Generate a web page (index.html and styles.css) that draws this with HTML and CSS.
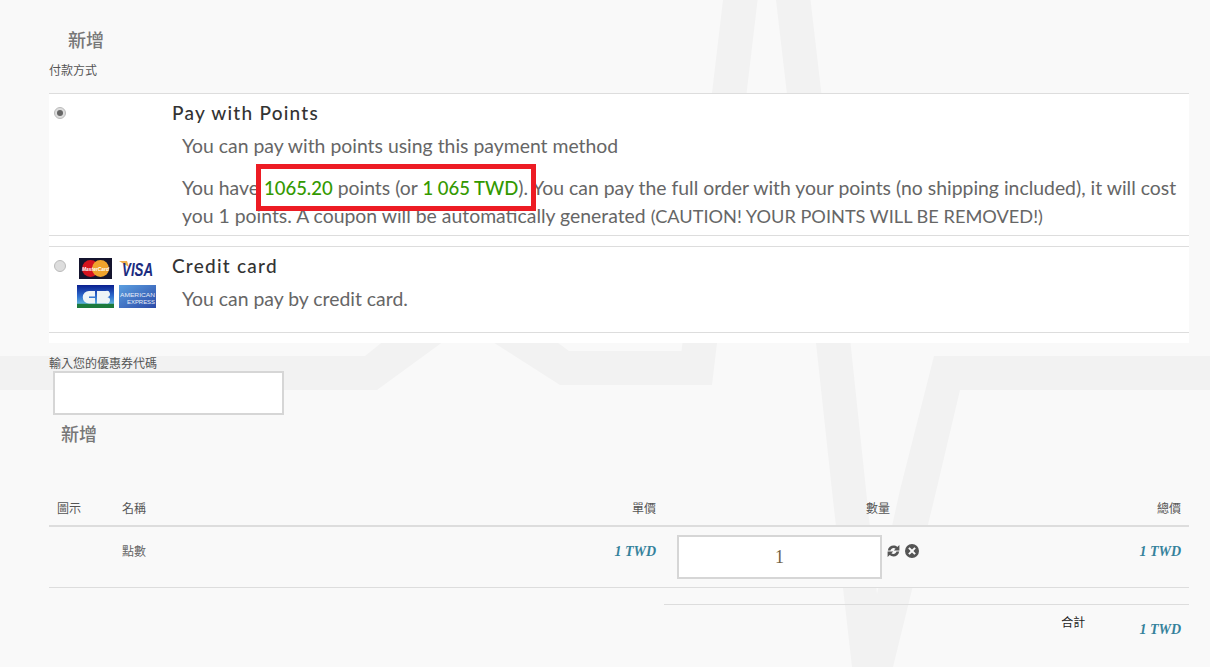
FILE: index.html
```html
<!DOCTYPE html>
<html lang="zh-Hant">

<head>
    <meta charset="UTF-8">
    <meta name="viewport" content="width=device-width, initial-scale=1.0">
    <title>付款方式</title>
    <link rel="stylesheet" href="styles.css">
</head>

<body>
    <svg class="bg-mark" width="1210" height="667" viewBox="0 0 1210 667">
        <path d="M0 356H365L466 275L569 351H681.5L723 0H757.6L717 343L712 385H560L466 325L377 390H0Z" />
        <path d="M776 0H810.5L850.5 343L877 594L900 490L934 356H1210V390H960L934 500L893 667H852L833 500L816 343Z" />
    </svg>

    <div class="page">
        <a class="add-link first">新增</a>
        <div class="label pay-label">付款方式</div>

        <div class="methods">
            <div class="method">
                <div class="method-pick">
                    <span class="radio checked"></span>
                </div>
                <div class="method-body">
                    <h3>Pay with Points</h3>
                    <p>You can pay with points using this payment method</p>
                    <p>You have <b>1065.20</b> points (or <b>1 065 TWD</b>). You can pay the full order with your points (no shipping included), it will cost you 1 points. A coupon will be automatically generated <span class="caps">(CAUTION! YOUR POINTS WILL BE REMOVED!)</span></p>
                    <div class="highlight"></div>
                </div>
            </div>

            <div class="method method-card">
                <div class="method-pick">
                    <span class="radio"></span>
                    <div class="cards">
                        <svg class="card-mc" width="33" height="21" viewBox="0 0 33 21">
                            <rect width="33" height="21" fill="#14142e" />
                            <circle cx="11.5" cy="10.5" r="8.5" fill="#d5121e" />
                            <circle cx="21.5" cy="10.5" r="8.5" fill="#f0a32c" />
                            <text x="16.5" y="12.5" text-anchor="middle" font-size="5" font-weight="bold" font-style="italic" fill="#fff" font-family="Liberation Sans" textLength="27" lengthAdjust="spacingAndGlyphs">MasterCard</text>
                        </svg>
                        <svg class="card-visa" width="37" height="23" viewBox="0 0 37 23">
                            <path d="M0 4H8L10 10Z" fill="#efb04e" />
                            <text transform="translate(3 19) scale(.74 1)" font-size="18" font-weight="bold" font-style="italic" fill="#1b2c80" font-family="Liberation Sans">VISA</text>
                        </svg>
                        <svg class="card-cb" width="37" height="23" viewBox="0 0 37 23">
                            <defs>
                                <linearGradient id="cbfill" x1="0" y1="0" x2="0" y2="1">
                                    <stop offset="0" stop-color="#0a1f8f" />
                                    <stop offset=".5" stop-color="#2f6fd0" />
                                    <stop offset=".8" stop-color="#5bb0d8" />
                                    <stop offset=".82" stop-color="#1c7a3c" />
                                    <stop offset="1" stop-color="#1c7a3c" />
                                </linearGradient>
                            </defs>
                            <rect width="37" height="23" fill="url(#cbfill)" />
                            <path d="M18 6H12a6.2 6.2 0 0 0 0 12.5H18V13H12V11.5H18ZM20 6H29a3 3 0 0 1 1.5 6.2a3 3 0 0 1 -1.5 6.3H20Z" fill="#eef4f6" />
                        </svg>
                        <svg class="card-amex" width="37" height="23" viewBox="0 0 37 23">
                            <defs>
                                <linearGradient id="amexfill" x1="0" y1="0" x2="1" y2="1">
                                    <stop offset="0" stop-color="#5b9fe0" />
                                    <stop offset="1" stop-color="#2c4aa8" />
                                </linearGradient>
                            </defs>
                            <rect width="37" height="23" fill="url(#amexfill)" />
                            <text x="1" y="11.5" font-size="5.5" fill="#e8eef8" font-family="Liberation Sans" textLength="35" lengthAdjust="spacingAndGlyphs">AMERICAN</text>
                            <text x="8" y="19" font-size="5.5" fill="#e8eef8" font-family="Liberation Sans" textLength="28" lengthAdjust="spacingAndGlyphs">EXPRESS</text>
                        </svg>
                    </div>
                </div>
                <div class="method-body">
                    <h3>Credit card</h3>
                    <p>You can pay by credit card.</p>
                </div>
            </div>
        </div>

        <div class="label coupon-label">輸入您的優惠券代碼</div>
        <input class="coupon-input" type="text">
        <a class="add-link second">新增</a>

        <table class="cart">
            <thead>
                <tr>
                    <th class="col-icon">圖示</th>
                    <th class="col-name">名稱</th>
                    <th class="col-price">單價</th>
                    <th class="col-qty">數量</th>
                    <th class="col-total">總價</th>
                </tr>
            </thead>
            <tbody>
                <tr>
                    <td></td>
                    <td class="name">點數</td>
                    <td class="price">1 TWD</td>
                    <td class="qty">
                        <div class="qty-wrap">
                            <input class="qty-input" type="text" value="1">
                            <svg class="icon" width="13" height="14" viewBox="0 0 13 14">
                                <path d="M0.8 6.6C1.3 3.4 3.8 1.6 6.5 1.6C8 1.6 9.3 2.1 10.3 3L12.4 0.9V6.6H6.7L8.6 4.7C8 4.3 7.4 4.1 6.6 4.1C5.2 4.1 4 5 3.5 6.6Z" />
                                <path transform="rotate(180 6.5 7)" d="M0.8 6.6C1.3 3.4 3.8 1.6 6.5 1.6C8 1.6 9.3 2.1 10.3 3L12.4 0.9V6.6H6.7L8.6 4.7C8 4.3 7.4 4.1 6.6 4.1C5.2 4.1 4 5 3.5 6.6Z" />
                            </svg>
                            <svg class="icon" width="14" height="14" viewBox="0 0 14 14">
                                <path fill-rule="evenodd" d="M7 0a7 7 0 1 0 0 14A7 7 0 0 0 7 0ZM4.6 3.2L7 5.6L9.4 3.2L10.8 4.6L8.4 7L10.8 9.4L9.4 10.8L7 8.4L4.6 10.8L3.2 9.4L5.6 7L3.2 4.6Z" />
                            </svg>
                        </div>
                    </td>
                    <td class="price">1 TWD</td>
                </tr>
            </tbody>
        </table>

        <div class="summary">
            <span class="summary-label">合計</span>
            <span class="price">1 TWD</span>
        </div>
    </div>
</body>

</html>
```

FILE: styles.css
```css
* {
    box-sizing: border-box;
}

html,
body {
    margin: 0;
    height: 667px;
    overflow: hidden;
}

body {
    background-color: #f9f9f9;
    font-family: "Lato", "Noto Sans CJK TC", sans-serif;
    color: #555;
    position: relative;
}

.bg-mark {
    position: absolute;
    left: 0;
    top: 0;
}

.bg-mark path {
    fill: #f2f2f2;
}

.page {
    position: relative;
    padding: 0 21px 0 49px;
}

.add-link {
    display: block;
    font-family: "Noto Sans CJK TC", sans-serif;
    font-size: 18px;
    font-weight: 500;
    line-height: 24px;
    color: #777;
}

.add-link.first {
    padding: 27px 0 0 19px;
}

.add-link.second {
    padding: 6px 0 0 12px;
}

.label {
    font-family: "Noto Sans CJK TC", sans-serif;
    font-size: 12px;
    line-height: 16px;
    color: #555;
}

.pay-label {
    margin-top: 11px;
}

.methods {
    margin-top: 15px;
    background-color: #fff;
    border-top: 1px solid #ddd;
    padding-bottom: 10px;
}

.method {
    display: flex;
    height: 142px;
    border-bottom: 1px solid #ddd;
}

.method-card {
    height: 87px;
    margin-top: 10px;
    border-top: 1px solid #ddd;
}

.method-pick {
    width: 123px;
    flex: none;
    position: relative;
}

.radio {
    display: block;
    position: absolute;
    left: 5px;
    top: 13px;
    width: 12px;
    height: 12px;
    border-radius: 50%;
    background-color: #ddd;
    border: 1px solid #bbb;
}

.radio.checked::after {
    content: "";
    position: absolute;
    left: 2px;
    top: 2px;
    width: 6px;
    height: 6px;
    border-radius: 50%;
    background-color: #666;
}

.cards {
    display: grid;
    grid-template-columns: 37px 37px;
    column-gap: 5px;
    row-gap: 5px;
    padding: 10px 0 0 28px;
    align-items: center;
}

.card-mc {
    margin-left: 2px;
}

.cards svg {
    display: block;
}

.method-body {
    flex: 1;
    position: relative;
}

.method-body h3 {
    margin: 0;
    padding-top: 7px;
    font-size: 19px;
    line-height: 24px;
    font-weight: 500;
    letter-spacing: 1.25px;
    color: #333;
}

.method-body p {
    margin: 7px 0 0 10px;
    font-size: 19.4px;
    line-height: 28px;
    color: #666;
}

.method-body p + p {
    margin-top: 14px;
}

.method-body b {
    font-size: 18.5px;
    font-weight: 500;
    color: #339900;
}

.caps {
    font-size: 18.2px;
}

/* red mark drawn over the paragraph */
.highlight {
    position: absolute;
    left: 84px;
    top: 70px;
    width: 280px;
    height: 47px;
    border: 5px solid #ed1c24;
}

.coupon-label {
    margin-top: 12px;
}

.coupon-input {
    display: block;
    margin: 0 0 0 4px;
    width: 231px;
    height: 44px;
    background-color: #fff;
    border: 2px solid #d6d6d6;
}

.cart {
    width: 100%;
    margin-top: 55px;
    border-collapse: collapse;
    table-layout: fixed;
}

.cart th {
    font-family: "Noto Sans CJK TC", sans-serif;
    font-size: 12px;
    font-weight: normal;
    line-height: 16px;
    color: #555;
    padding: 0 8px 9px;
    border-bottom: 2px solid #ddd;
    text-align: left;
}

.col-icon {
    width: 65px;
}

.col-name {
    width: 200px;
}

.col-qty {
    width: 428px;
}

.col-total {
    width: 97px;
}

.cart th.col-price,
.cart th.col-total {
    text-align: right;
}

.cart th.col-qty {
    text-align: center;
}

.cart td {
    height: 61px;
    padding: 8px;
    vertical-align: top;
    background-color: #f9f9f9;
    border-bottom: 1px solid #ddd;
}

.cart td.name {
    font-family: "Noto Sans CJK TC", sans-serif;
    font-size: 12px;
    line-height: 32px;
    color: #666;
}

.price {
    font-family: "Liberation Serif", serif;
    font-size: 14px;
    font-weight: bold;
    font-style: italic;
    color: #35829c;
}

.cart td.price {
    line-height: 34px;
    text-align: right;
}

.cart td.qty {
    padding-left: 13px;
}

.qty-wrap {
    display: flex;
    align-items: flex-start;
    gap: 5px;
}

.qty-input {
    width: 205px;
    height: 44px;
    background-color: #fff;
    border: 2px solid #d6d6d6;
    text-align: center;
    font-family: "Liberation Serif", serif;
    font-size: 18px;
    color: #6f5f45;
}

.icon {
    fill: #555;
    margin-top: 9px;
}

.summary {
    display: flex;
    align-items: flex-start;
    justify-content: flex-end;
    margin: 16px 0 0 615px;
    padding: 9px 8px 0 0;
    border-top: 1px solid #ddd;
}

.summary-label {
    font-family: "Noto Sans CJK TC", sans-serif;
    font-size: 12px;
    line-height: 16px;
    color: #222;
    margin-right: 54px;
}

.summary .price {
    margin-top: 8px;
}
```
